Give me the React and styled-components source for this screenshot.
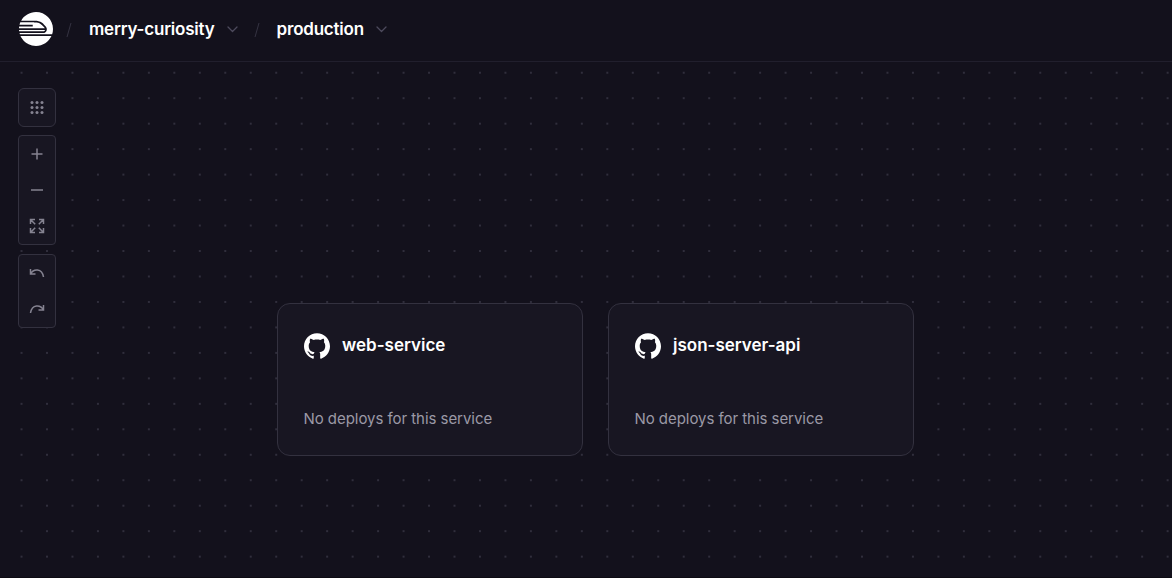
import React from "react";
import styled, { createGlobalStyle } from "styled-components";
import { SiRailway, SiGithub } from "react-icons/si";

const GlobalStyle = createGlobalStyle`
  * { box-sizing: border-box; }
  body { margin: 0; background: #13111c; font-family: Inter, "Liberation Sans", sans-serif; overflow: hidden; }
`;

const Page = styled.div`
  display: flex;
  flex-direction: column;
  height: 578px;
  background: #13111c;
  border-bottom: 1px solid #0d0b13;
`;

const Header = styled.header`
  display: flex;
  align-items: center;
  flex: none;
  height: 62px;
  padding: 0 0 4px 19px;
  border-bottom: 1px solid #211f2d;
  color: #fff;
`;

const Logo = styled(SiRailway)`
  width: 34px;
  height: 34px;
`;

const Slash = styled.svg`
  width: 6px;
  height: 16px;
  margin: 2px 0 0 ${(p) => p.$gap}px;
  fill: none;
  stroke: #353342;
`;

const Crumb = styled.button`
  display: flex;
  align-items: center;
  gap: 12px;
  margin-left: 17px;
  padding: 1px 0 0;
  border: 0;
  background: none;
  color: #fff;
  font: 600 17px/24px Inter, sans-serif;
  letter-spacing: -0.21px;
  white-space: nowrap;
`;

const Chevron = styled.svg`
  width: 11px;
  height: 7px;
  fill: none;
  stroke: #4d4a5c;
  stroke-width: 1.3;
  stroke-linecap: round;
  stroke-linejoin: round;
`;

const Canvas = styled.main`
  display: flex;
  align-items: flex-start;
  flex: 1;
  padding: 26px 0 0 18px;
  background-image: radial-gradient(circle, #302e3c 0.8px, transparent 1.5px);
  background-size: 25.47px 25.47px;
  background-position: 8.8px -2px;
`;

const Toolbar = styled.aside`
  display: flex;
  flex-direction: column;
  width: 38px;
`;

const ToolGroup = styled.div`
  display: flex;
  flex-direction: column;
  margin-bottom: ${(p) => p.$gap || 0}px;
  border: 1px solid #33313f;
  border-radius: ${(p) => p.$radius || 4}px;
  background: #181622;
`;

const Tool = styled.button`
  display: flex;
  align-items: center;
  justify-content: center;
  height: ${(p) => p.$height || 36}px;
  padding: 0;
  border: 0;
  background: none;
  color: #858391;
`;

const Glyph = styled.svg`
  width: 16px;
  height: 16px;
  fill: none;
  stroke: currentColor;
  stroke-width: 1.5;
`;

const Services = styled.section`
  display: flex;
  gap: 25.5px;
  margin: 215px 0 0 221px;
`;

const Card = styled.article`
  display: flex;
  flex-direction: column;
  justify-content: space-between;
  width: 305.5px;
  height: 153px;
  padding: 29px 25.5px 24px;
  border: 1px solid #33313f;
  border-radius: 13px;
  background: #181622;
`;

const CardHead = styled.div`
  display: flex;
  align-items: center;
  gap: 12.5px;
  color: #fff;
`;

const Github = styled(SiGithub)`
  width: 26px;
  height: 26px;
`;

const CardTitle = styled.h2`
  margin: 0 0 2px;
  font-size: 17px;
  line-height: 24px;
  font-weight: 600;
`;

const Status = styled.p`
  margin: 0;
  color: #9b99a6;
  font-size: 15px;
  line-height: 24px;
  letter-spacing: -0.05px;
`;

const Divider = ({ gap }) => (
  <Slash $gap={gap} viewBox="0 0 6 16"><path d="M5 1 1 15" /></Slash>
);

const Down = () => (
  <Chevron viewBox="0 0 11 7"><path d="m1 1 4.500 4.500L10 1" /></Chevron>
);

const services = ["web-service", "json-server-api"];
const grid = [3, 8, 13];

export default function App() {
  return (
    <Page>
      <GlobalStyle />
      <Header>
        <Logo />
        <Divider gap={13} />
        <Crumb>merry-curiosity<Down /></Crumb>
        <Divider gap={16} />
        <Crumb>production<Down /></Crumb>
      </Header>
      <Canvas>
        <Toolbar>
          <ToolGroup $radius={6} $gap={8}>
            <Tool $height={37} aria-label="Grid">
              <Glyph viewBox="0 0 16 16">
                {grid.map((y) => grid.map((x) => (
                  <circle key={`${x}-${y}`} cx={x} cy={y - 0.5} r="1.5" fill="currentColor" stroke="none" />
                )))}
              </Glyph>
            </Tool>
          </ToolGroup>
          <ToolGroup $gap={9}>
            <Tool aria-label="Zoom in"><Glyph viewBox="0 0 16 16"><path d="M8 2.500v11M2.500 8h11" /></Glyph></Tool>
            <Tool aria-label="Zoom out"><Glyph viewBox="0 0 16 16"><path d="M2 8h12" /></Glyph></Tool>
            <Tool aria-label="Fit view">
              <Glyph viewBox="0 0 16 16">
                <path d="M1.500 6v-4.500h4.500M1.500 1.500l4.700 4.700M10 1.500h4.500v4.500M14.500 1.500l-4.700 4.700M1.500 10v4.500h4.500M1.500 14.500l4.700-4.700M14.500 10v4.500h-4.500M14.500 14.500l-4.700-4.700" />
              </Glyph>
            </Tool>
          </ToolGroup>
          <ToolGroup>
            <Tool aria-label="Undo"><Glyph viewBox="0 0 16 16"><path d="M1.500 4v5h5M1.500 9C4.500 3.500 13 3 14.500 12" /></Glyph></Tool>
            <Tool aria-label="Redo"><Glyph viewBox="0 0 16 16"><path d="M14.500 4v5h-5M14.500 9C11.500 3.500 3 3 1.500 12" /></Glyph></Tool>
          </ToolGroup>
        </Toolbar>
        <Services>
          {services.map((name) => (
            <Card key={name}>
              <CardHead><Github /><CardTitle>{name}</CardTitle></CardHead>
              <Status>No deploys for this service</Status>
            </Card>
          ))}
        </Services>
      </Canvas>
    </Page>
  );
}
